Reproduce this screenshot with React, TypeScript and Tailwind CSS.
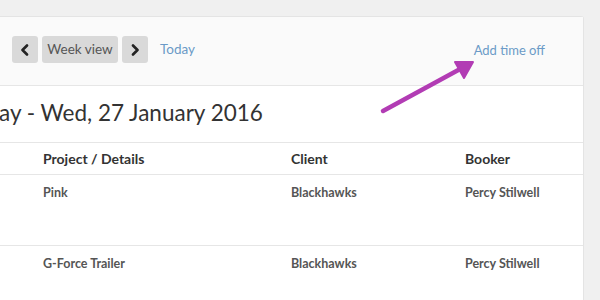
import React from 'react';

const rows = [
  { project: 'Pink', client: 'Blackhawks', booker: 'Percy Stilwell' },
  { project: 'G-Force Trailer', client: 'Blackhawks', booker: 'Percy Stilwell' },
];

function Chevron({ dir }: { dir: 'left' | 'right' }) {
  return (
    <svg width="10" height="12" viewBox="0 0 10 12">
      <path
        d={dir === 'left' ? 'M7 1.5 L2.5 6 L7 10.5' : 'M3 1.5 L7.5 6 L3 10.5'}
        fill="none"
        stroke="#222"
        strokeWidth="2.6"
        strokeLinecap="round"
        strokeLinejoin="round"
      />
    </svg>
  );
}

export default function App() {
  return (
    <div className="relative w-[600px] h-[300px] overflow-hidden bg-[#f0f0f0] pt-4 pr-[16px] font-['Lato',sans-serif]">
      <div className="h-[320px] bg-white border border-l-0 border-[#e4e4e4] rounded-tr-[3px]">
        {/* toolbar */}
        <div className="h-[69px] bg-[#fafafa] border-b border-[#e6e6e6] flex items-start justify-between pl-3 pr-[38px] pt-[19px]">
          <div className="flex items-center gap-1">
            <button className="w-[26px] h-[27px] rounded-[3px] bg-[#d9d9d9] flex items-center justify-center">
              <Chevron dir="left" />
            </button>
            <button className="w-[76px] h-[27px] rounded-[3px] bg-[#d9d9d9] text-[13.5px] text-[#555]">
              Week view
            </button>
            <button className="w-[26px] h-[27px] rounded-[3px] bg-[#d9d9d9] flex items-center justify-center">
              <Chevron dir="right" />
            </button>
            <span className="ml-2 text-[13.5px] text-[#6b9ac7]">Today</span>
          </div>
          <span className="mt-[5px] text-[13px] text-[#6b9ac7]">Add time off</span>
        </div>

        {/* title */}
        <div className="h-[57px] border-b border-[#e6e6e6] flex items-center pb-[3px]">
          <h1 className="text-[22.5px] text-[#333] -ml-[1px]">ay - Wed, 27 January 2016</h1>
        </div>

        {/* table */}
        <div className="grid grid-cols-[43px_248px_174px_1fr]">
          <div className="contents text-[14px] font-bold text-[#333]">
            <div className="h-[32px] border-b border-[#e6e6e6]" />
            <div className="h-[32px] border-b border-[#e6e6e6] flex items-center">Project / Details</div>
            <div className="h-[32px] border-b border-[#e6e6e6] flex items-center">Client</div>
            <div className="h-[32px] border-b border-[#e6e6e6] flex items-center">Booker</div>
          </div>
          {rows.map((r, i) => (
            <div key={i} className="contents text-[12.5px] font-bold text-[#555]">
              <div className="h-[71px] border-b border-[#e6e6e6]" />
              <div className="h-[71px] border-b border-[#e6e6e6] pt-[9px]">{r.project}</div>
              <div className="h-[71px] border-b border-[#e6e6e6] pt-[9px]">{r.client}</div>
              <div className="h-[71px] border-b border-[#e6e6e6] pt-[9px]">{r.booker}</div>
            </div>
          ))}
        </div>
      </div>

      {/* annotation arrow */}
      <svg className="absolute left-0 top-0" width="600" height="300">
        <line x1="383" y1="111" x2="462" y2="68" stroke="#b23cb4" strokeWidth="4.5" strokeLinecap="round" />
        <polygon points="473,62 455,62 464,78" fill="#b23cb4" stroke="#b23cb4" strokeWidth="2" strokeLinejoin="round" />
      </svg>
    </div>
  );
}
